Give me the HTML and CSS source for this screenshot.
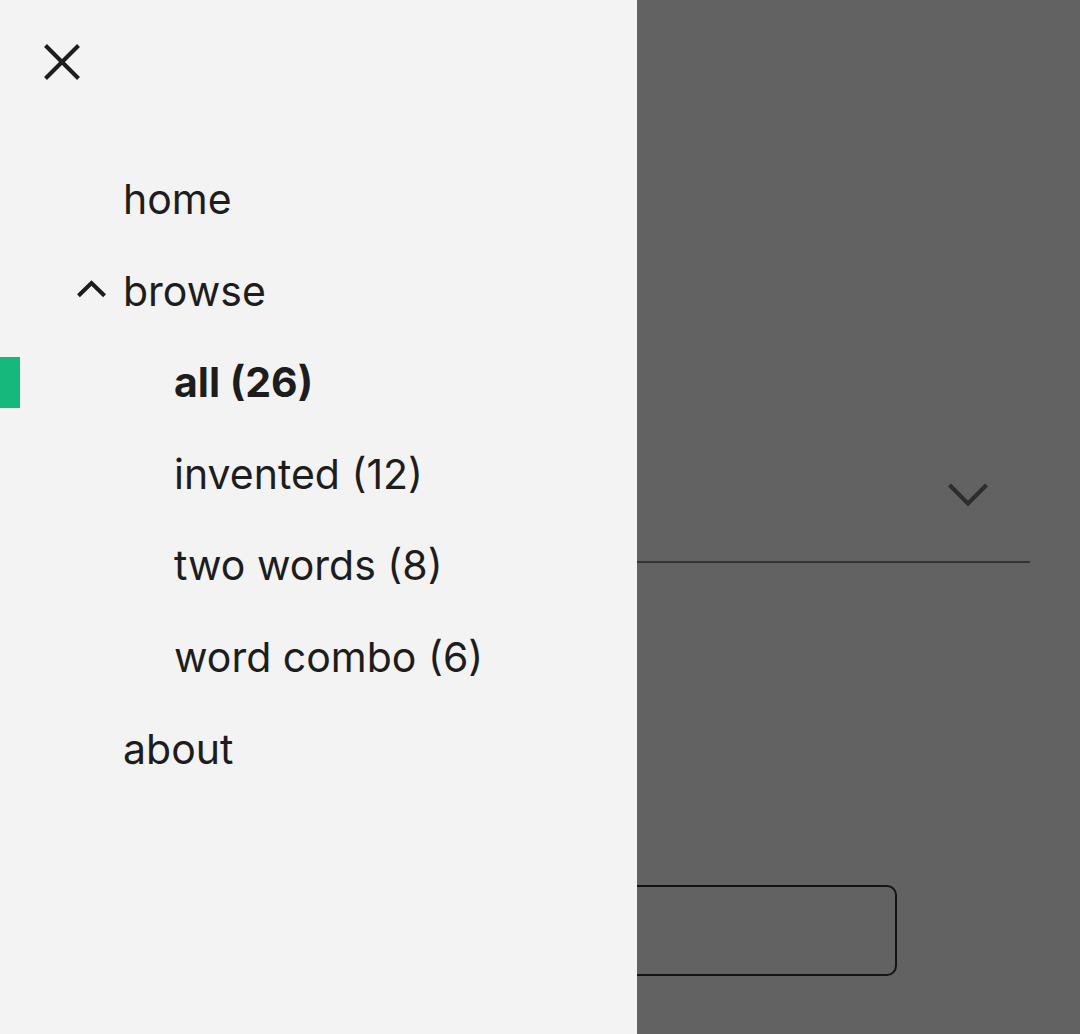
FILE: index.html
```html
<!DOCTYPE html>
<html lang="en">
<head>
    <meta charset="UTF-8">
    <meta name="viewport" content="width=device-width, initial-scale=1.0">
    <title>Names</title>
    <link rel="stylesheet" href="styles.css">
</head>
<body>
    <div class="page">
        <div class="select">
            <span class="select-value"></span>
            <svg class="select-arrow" width="40" height="24" viewBox="0 0 40 24">
                <polyline points="1.5,2 20,20.5 38.5,2" fill="none" stroke="currentColor" stroke-width="4.2"/>
            </svg>
        </div>
        <div class="search-box"></div>
    </div>

    <div class="scrim"></div>

    <nav class="drawer">
        <button class="close-btn" type="button" aria-label="close">
            <svg width="36" height="36" viewBox="0 0 36 36">
                <line x1="1.5" y1="1.5" x2="34.5" y2="34.5" stroke="currentColor" stroke-width="4"/>
                <line x1="34.5" y1="1.5" x2="1.5" y2="34.5" stroke="currentColor" stroke-width="4"/>
            </svg>
        </button>

        <ul class="menu">
            <li class="menu-item"><span class="menu-icon"></span><a href="#">home</a></li>
            <li class="menu-item">
                <span class="menu-icon">
                    <svg width="30" height="18" viewBox="0 0 30 18">
                        <polyline points="1.5,16 15,2.8 28.5,16" fill="none" stroke="currentColor" stroke-width="4.2"/>
                    </svg>
                </span>
                <a href="#">browse</a>
            </li>
            <li class="sub-item active"><a href="#">all (26)</a></li>
            <li class="sub-item"><a href="#">invented (12)</a></li>
            <li class="sub-item"><a href="#">two words (8)</a></li>
            <li class="sub-item"><a href="#">word combo (6)</a></li>
            <li class="menu-item"><span class="menu-icon"></span><a href="#">about</a></li>
        </ul>
    </nav>
</body>
</html>
```

FILE: styles.css
```css
body {
    margin: 0;
    font-family: Inter, "Noto Sans", sans-serif;
    background-color: #fff;
    color: #1d1d1d;
}
.page {
    padding: 440px 50px 0 50px;
    height: 1034px;
    box-sizing: border-box;
}
.select {
    display: flex;
    justify-content: space-between;
    align-items: flex-start;
    height: 78px;
    padding: 43px 42px 0 0;
    border-bottom: 2px solid #858585;
}
.select-arrow {
    color: #787878;
    display: block;
}
.search-box {
    margin-top: 322px;
    width: 847px;
    height: 91px;
    border: 2px solid #343434;
    border-radius: 10px;
    box-sizing: border-box;
}
.scrim {
    position: fixed;
    top: 0;
    left: 0;
    right: 0;
    bottom: 0;
    background-color: rgba(0, 0, 0, 0.616);
}
.drawer {
    position: fixed;
    top: 0;
    left: 0;
    bottom: 0;
    width: 637px;
    background-color: #f3f3f3;
}
.close-btn {
    display: block;
    margin: 44px 0 0 44px;
    padding: 0;
    border: none;
    background: none;
    color: #1d1d1d;
    cursor: pointer;
}
.close-btn svg {
    display: block;
}
.menu {
    list-style: none;
    margin: 94px 0 0 0;
    padding: 0;
    display: flex;
    flex-direction: column;
    gap: 40.6px;
}
.menu li {
    height: 51px;
    line-height: 51px;
    font-size: 41px;
    display: flex;
    align-items: center;
}
.menu a {
    color: #1d1d1d;
    text-decoration: none;
}
.menu-item {
    padding-left: 77px;
}
.menu-icon {
    width: 29px;
    margin-right: 17px;
    display: flex;
    align-items: center;
    position: relative;
    top: -2px;
}
.sub-item {
    padding-left: 174px;
}
.sub-item.active {
    padding-left: 154px;
    border-left: 20px solid #17b87b;
}
.sub-item.active a {
    font-weight: 700;
}
```
